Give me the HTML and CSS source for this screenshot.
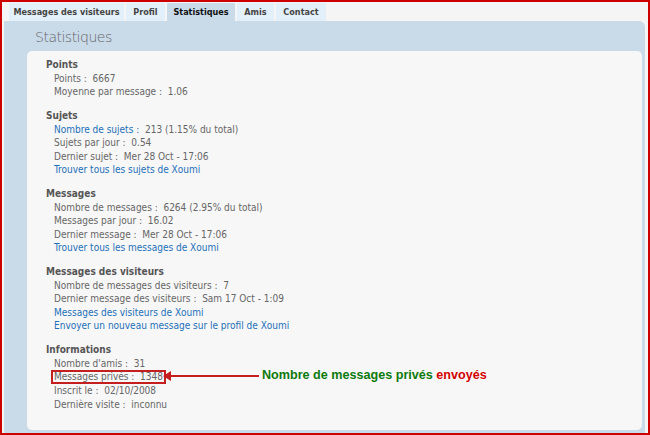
FILE: index.html
```html
<!DOCTYPE html>
<html>
<head>
<meta charset="utf-8">
<link rel="stylesheet" href="styles.css">
</head>
<body>
<div class="frame">
  <div class="tabs">
    <span class="tab w1">Messages des visiteurs</span>
    <span class="tab w2">Profil</span>
    <span class="tab w3 active">Statistiques</span>
    <span class="tab w4">Amis</span>
    <span class="tab w5">Contact</span>
  </div>
  <div class="panel">
    <div class="title">Statistiques</div>
    <div class="inner">
      <div class="section">
        <div class="head">Points</div>
        <div class="row">Points :&nbsp; 6667</div>
        <div class="row">Moyenne par message :&nbsp; 1.06</div>
      </div>
      <div class="section">
        <div class="head">Sujets</div>
        <div class="row"><span class="link">Nombre de sujets :</span>&nbsp; 213 (1.15% du total)</div>
        <div class="row">Sujets par jour :&nbsp; 0.54</div>
        <div class="row">Dernier sujet :&nbsp; Mer 28 Oct - 17:06</div>
        <div class="row link">Trouver tous les sujets de Xoumi</div>
      </div>
      <div class="section">
        <div class="head">Messages</div>
        <div class="row">Nombre de messages :&nbsp; 6264 (2.95% du total)</div>
        <div class="row">Messages par jour :&nbsp; 16.02</div>
        <div class="row">Dernier message :&nbsp; Mer 28 Oct - 17:06</div>
        <div class="row link">Trouver tous les messages de Xoumi</div>
      </div>
      <div class="section">
        <div class="head">Messages des visiteurs</div>
        <div class="row">Nombre de messages des visiteurs :&nbsp; 7</div>
        <div class="row">Dernier message des visiteurs :&nbsp; Sam 17 Oct - 1:09</div>
        <div class="row link">Messages des visiteurs de Xoumi</div>
        <div class="row link">Envoyer un nouveau message sur le profil de Xoumi</div>
      </div>
      <div class="section">
        <div class="head">Informations</div>
        <div class="row">Nombre d'amis :&nbsp; 31</div>
        <div class="row annotated">
          <span class="boxed">Messages privés :&nbsp; 1348</span>
          <span class="arrow"></span>
          <span class="note"><span class="green">Nombre de messages privés</span> <span class="red">envoyés</span></span>
        </div>
        <div class="row">Inscrit le :&nbsp; 02/10/2008</div>
        <div class="row">Dernière visite :&nbsp; inconnu</div>
      </div>
    </div>
  </div>
</div>
</body>
</html>
```
FILE: styles.css
```css
html, body { margin: 0; padding: 0; }
body { background: #f5f5f5; }
.frame {
  width: 650px;
  height: 435px;
  box-sizing: border-box;
  border: 2px solid #cc0000;
  background: #f5f5f5;
  padding: 1px 3px 0 2px;
  display: flex;
  flex-direction: column;
}
.tabs {
  display: flex;
  gap: 2px;
  margin-left: 5px;
  height: 18px;
}
.tab {
  background: #e4f0f9;
  font-family: "DejaVu Sans Condensed", "DejaVu Sans", sans-serif;
  font-weight: bold;
  font-size: 9px;
  color: #444;
  line-height: 18px;
  text-align: center;
}
.tab.active { background: #c9dae9; color: #111; }
.w1 { width: 115px; }
.w2 { width: 39px; }
.w3 { width: 68px; }
.w4 { width: 37px; }
.w5 { width: 50px; }
.panel {
  flex: 1;
  background: #c9dae9;
  border-top-right-radius: 6px;
  padding: 0 3px 3px 23px;
  display: flex;
  flex-direction: column;
}
.title {
  height: 30px;
  line-height: 33px;
  padding-left: 8px;
  font-family: "DejaVu Sans", sans-serif;
  font-weight: 200;
  font-size: 14px;
  letter-spacing: -0.5px;
  color: #666;
}
.inner {
  flex: 1;
  background: #f7f7f7;
  border-radius: 5px;
  padding: 7px 0 0 19px;
  font-family: "DejaVu Sans Condensed", "DejaVu Sans", sans-serif;
  font-size: 10px;
  color: #666;
}
.section { margin-bottom: 10.5px; }
.head { line-height: 13.5px; font-weight: bold; color: #555; }
.row { line-height: 13.5px; margin-left: 8px; white-space: nowrap; }
.link { color: #1d70b7; }
.annotated { position: relative; }
.boxed {
  display: inline-block;
  border: 2px solid #c41e1e;
  padding: 0 1px;
  margin-left: -3px;
  line-height: 10px;
}
.arrow {
  position: absolute;
  left: 113px;
  top: 5px;
  width: 92px;
  height: 2px;
  background: #c41e1e;
}
.arrow::before {
  content: "";
  position: absolute;
  left: -4px;
  top: -4px;
  border-right: 8px solid #c41e1e;
  border-top: 5px solid transparent;
  border-bottom: 5px solid transparent;
}
.note {
  position: absolute;
  left: 208px;
  top: -2px;
  font-family: "Liberation Sans", Arial, sans-serif;
  font-weight: bold;
  font-size: 12.6px;
  line-height: 14px;
}
.green { color: #0e7a0e; }
.red { color: #d40000; }
```
